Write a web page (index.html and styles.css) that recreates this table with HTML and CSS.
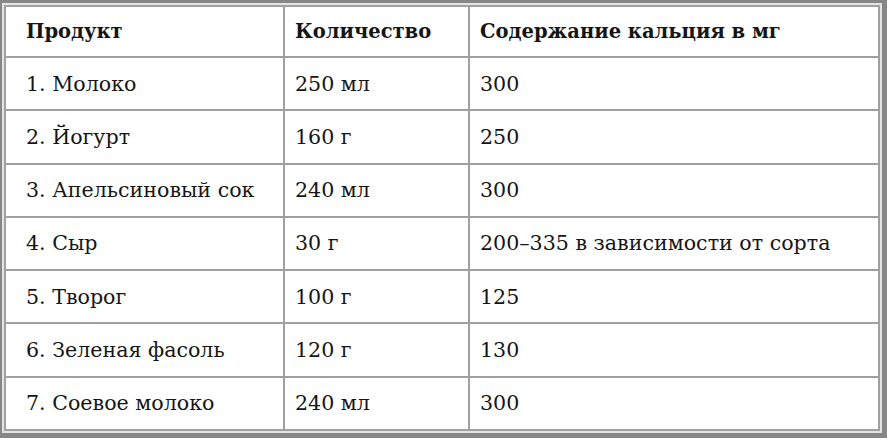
FILE: index.html
```html
<!DOCTYPE html>
<html lang="ru">
<head>
<meta charset="utf-8">
<link rel="stylesheet" href="styles.css">
</head>
<body>
<div class="frame">
<table class="calcium">
<colgroup><col class="c1"><col class="c2"><col class="c3"></colgroup>
<thead>
<tr class="head"><th class="first">Продукт</th><th>Количество</th><th>Содержание кальция в мг</th></tr>
</thead>
<tbody>
<tr><td class="first">1. Молоко</td><td>250 мл</td><td>300</td></tr>
<tr><td class="first">2. Йогурт</td><td>160 г</td><td>250</td></tr>
<tr><td class="first">3. Апельсиновый сок</td><td>240 мл</td><td>300</td></tr>
<tr><td class="first">4. Сыр</td><td>30 г</td><td>200–335 в зависимости от сорта</td></tr>
<tr><td class="first">5. Творог</td><td>100 г</td><td>125</td></tr>
<tr><td class="first">6. Зеленая фасоль</td><td>120 г</td><td>130</td></tr>
<tr><td class="first">7. Соевое молоко</td><td>240 мл</td><td>300</td></tr>
</tbody>
</table>
</div>
</body>
</html>
```
FILE: styles.css
```css
html, body {
  margin: 0;
  padding: 0;
  background: #ffffff;
}
.frame {
  width: 887px;
  height: 438px;
  box-sizing: border-box;
  border-style: solid;
  border-color: #878787;
  border-width: 3px 5px 5px 2px;
  padding: 2px;
  background: #e4e4e4;
}
.calcium {
  width: 100%;
  height: 100%;
  border-collapse: collapse;
  background: #ffffff;
  border: 2px solid #a0a0a0;
  font-family: "DejaVu Serif", "Liberation Serif", serif;
  font-size: 20.6px;
  color: #151515;
  table-layout: fixed;
}
.c1 { width: 279px; }
.c2 { width: 185px; }
.c3 { width: auto; }
.calcium th,
.calcium td {
  border: 2px solid #a0a0a0;
  text-align: left;
  padding: 0 0 0 10px;
  vertical-align: middle;
  white-space: nowrap;
}
.calcium th {
  font-weight: bold;
  font-size: 19.5px;
  height: 49px;
}
.calcium .first {
  padding-left: 20px;
}
```
